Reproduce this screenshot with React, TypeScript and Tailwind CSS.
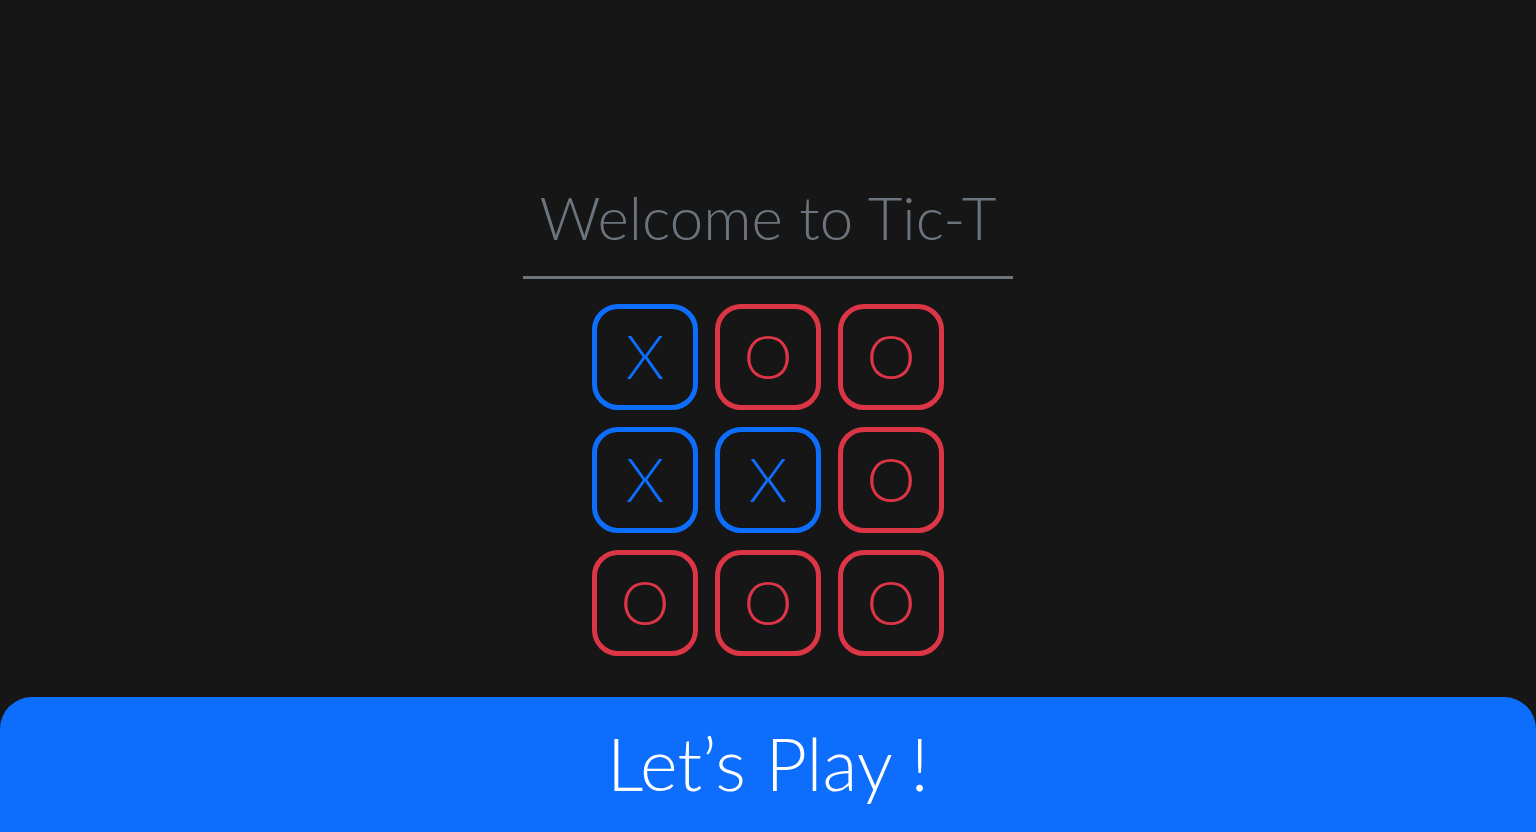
import { useState } from "react";

type Mark = "X" | "O";

// board shown on the welcome screen
const initialBoard: Mark[] = ["X", "O", "O", "X", "X", "O", "O", "O", "O"];

function Cell({ mark }: { mark: Mark }) {
  const isX = mark === "X";
  return (
    <div
      className={
        isX
          ? "flex h-[106px] w-[106px] items-center justify-center rounded-[26px] border-[5px] border-[#0d6efd] text-[#0d6efd]"
          : "flex h-[106px] w-[106px] items-center justify-center rounded-[26px] border-[5px] border-[#dc3545] text-[#dc3545]"
      }
    >
      <span className="pb-[4px] text-[62px] font-light leading-none">{mark}</span>
    </div>
  );
}

export default function App() {
  const [board] = useState(initialBoard);

  return (
    <div className="flex h-[832px] w-full flex-col overflow-hidden bg-[#161616] font-['Lato','Noto_Sans',sans-serif]">
      <div className="flex flex-1 flex-col items-center pt-[180px]">
        <div className="flex w-[490px] flex-col items-center">
          <h1 className="pb-[22px] text-[60px] font-light leading-[74px] text-[#6c757d]">
            Welcome to Tic-T
          </h1>
          <div className="h-[3px] w-full bg-[#6c757d]" />
        </div>
        <div className="mt-[25px] grid grid-cols-3 gap-[17px]">
          {board.map((mark, i) => (
            <Cell key={i} mark={mark} />
          ))}
        </div>
      </div>
      <button className="flex h-[135px] w-full items-center justify-center rounded-t-[32px] bg-[#0d6efd] pb-[4px] text-[72px] font-light text-white">
        Let’s Play !
      </button>
    </div>
  );
}
